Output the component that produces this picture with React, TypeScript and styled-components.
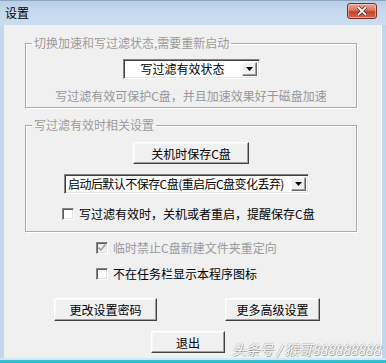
import React from 'react';
import styled, { createGlobalStyle, css } from 'styled-components';

const GlobalStyle = createGlobalStyle`
  html, body {
    margin: 0;
    padding: 0;
    background: #f0f0f0;
  }
  body {
    font-family: "Noto Sans CJK SC", "Microsoft YaHei", sans-serif;
    font-size: 12px;
  }
`;

const Window = styled.div`
  position: relative;
  width: 386px;
  height: 363px;
  display: flex;
  flex-direction: column;
  background: linear-gradient(90deg, #c4d7ec 0%, #cfe0f2 50%, #c2d6eb 100%);
  overflow: hidden;
`;

const TitleBar = styled.div`
  height: 25px;
  flex: none;
  display: flex;
  align-items: flex-start;
  justify-content: space-between;
  background: linear-gradient(180deg, #b8cfe7 0%, #c6d9ee 45%, #cadcf0 100%);
  border-top: 1px solid #8ea6c1;
  box-sizing: border-box;
`;

const Title = styled.span`
  margin: 4px 0 0 5px;
  line-height: 16px;
  font-size: 12px;
  color: #000;
`;

const CloseButton = styled.div`
  width: 30px;
  height: 16px;
  margin: 2px 9px 0 0;
  box-sizing: border-box;
  border: 1px solid #7a2d22;
  border-radius: 3px;
  background: linear-gradient(180deg, #e8a898 0%, #d7755f 45%, #c4422b 55%, #d06a50 100%);
  box-shadow: inset 0 0 0 1px rgba(255, 220, 210, 0.5);
  display: flex;
  align-items: center;
  justify-content: center;
`;

const Body = styled.div`
  flex: 1;
  margin: 0 4px 0 4px;
  background: #f0f0f0;
  border-right: 1px solid #fbfbfb;
  display: flex;
  flex-direction: column;
  align-items: flex-start;
  padding-top: 11px;
`;

const BottomEdge = styled.div`
  height: 5px;
  flex: none;
  background: linear-gradient(180deg, #d8e6f2 0%, #d8e6f2 40%, #3cc1dd 40%, #34b8d8 100%);
`;

const Group = styled.fieldset<{ $gap?: number }>`
  width: 332px;
  box-sizing: border-box;
  margin: ${p => p.$gap ?? 0}px 0 0 21px;
  padding: 0;
  border: 1px solid #a9a9a9;
  box-shadow: 1px 1px 0 #fff, inset 1px 1px 0 #fff;
  display: flex;
  flex-direction: column;
  align-items: flex-start;
`;

const Legend = styled.legend`
  margin-left: 6px;
  padding: 0 2px;
  line-height: 14px;
  height: 14px;
  color: #9a9a9a;
`;

const Item = styled.div<{ $top: number; $left?: number; $center?: boolean }>`
  margin-top: ${p => p.$top}px;
  ${p =>
    p.$center
      ? css`align-self: center;`
      : css`margin-left: ${p.$left ?? 0}px;`}
`;

const Combo = styled.div<{ $width: number }>`
  width: ${p => p.$width}px;
  height: 20px;
  box-sizing: border-box;
  display: flex;
  background: #fff;
  border-top: 1px solid #828282;
  border-left: 1px solid #828282;
  border-bottom: 1px solid #ffffff;
  border-right: 1px solid #ffffff;
  box-shadow: inset 1px 1px 0 #404040, inset -1px -1px 0 #e3e3e3;
`;

const ComboText = styled.div<{ $align: 'center' | 'left' }>`
  flex: 1;
  min-width: 0;
  line-height: 17px;
  padding-left: ${p => (p.$align === 'left' ? 3 : 0)}px;
  letter-spacing: ${p => (p.$align === 'left' ? '-0.55px' : '0')};
  text-align: ${p => p.$align};
  color: #000;
  white-space: nowrap;
`;

const ComboArrow = styled.div`
  width: 15px;
  flex: none;
  margin: 2px 2px 2px 0;
  box-sizing: border-box;
  background: #f0f0f0;
  border-top: 1px solid #fff;
  border-left: 1px solid #fff;
  border-right: 1px solid #696969;
  border-bottom: 1px solid #696969;
  box-shadow: inset -1px -1px 0 #a0a0a0;
  display: flex;
  align-items: center;
  justify-content: center;
`;

const Description = styled.div`
  line-height: 14px;
  color: #979797;
  white-space: nowrap;
`;

const PushButton = styled.div<{ $width: number; $height: number }>`
  width: ${p => p.$width}px;
  height: ${p => p.$height}px;
  box-sizing: border-box;
  background: #f0f0f0;
  border-top: 1px solid #ffffff;
  border-left: 1px solid #ffffff;
  border-right: 1px solid #404040;
  border-bottom: 1px solid #404040;
  box-shadow: inset -1px -1px 0 #a0a0a0, inset 1px 1px 0 #f8f8f8;
  display: flex;
  align-items: center;
  justify-content: center;
  color: #000;
  white-space: nowrap;
`;

const CheckRow = styled.label<{ $disabled?: boolean }>`
  display: flex;
  align-items: center;
  gap: 5px;
  line-height: 14px;
  color: ${p => (p.$disabled ? '#9a9a9a' : '#000')};
  white-space: nowrap;
`;

const CheckBox = styled.span<{ $disabled?: boolean }>`
  width: 12px;
  height: 12px;
  box-sizing: border-box;
  background: ${p => (p.$disabled ? '#f0f0f0' : '#fff')};
  border-top: 1px solid #848484;
  border-left: 1px solid #848484;
  border-right: 1px solid #ffffff;
  border-bottom: 1px solid #ffffff;
  box-shadow: inset 1px 1px 0 #5a5a5a, inset -1px -1px 0 #e0e0e0;
  display: flex;
  align-items: center;
  justify-content: center;
`;

const ButtonRow = styled.div`
  margin: 17px 0 0 50px;
  display: flex;
  gap: 68px;
`;

const Watermark = styled.div`
  position: absolute;
  right: 6px;
  bottom: 7px;
  font-size: 14px;
  line-height: 14px;
  font-style: italic;
  color: #f6f6f6;
  letter-spacing: -0.2px;
  text-shadow: 1px 1px 0 rgba(0, 0, 0, 0.32), -1px 0 0 rgba(0, 0, 0, 0.16), 0 -1px 0 rgba(0, 0, 0, 0.16);
  white-space: nowrap;
`;

const Arrow = () => (
  <svg width="7" height="4" viewBox="0 0 7 4">
    <path d="M0 0h7L3.5 4z" fill="#000" />
  </svg>
);

const Check = ({ color }: { color: string }) => (
  <svg width="8" height="8" viewBox="0 0 8 8">
    <path d="M0.5 3.5l2.3 2.5 4.7-5.5" stroke={color} strokeWidth="1.6" fill="none" />
  </svg>
);

const App: React.FC = () => (
  <>
    <GlobalStyle />
    <Window>
      <TitleBar>
        <Title>设置</Title>
        <CloseButton>
          <svg width="12" height="10" viewBox="0 0 12 10">
            <path d="M2 1l8 8M10 1l-8 8" stroke="#5a1a12" strokeWidth="3.2" />
            <path d="M2 1l8 8M10 1l-8 8" stroke="#fff" strokeWidth="1.8" />
          </svg>
        </CloseButton>
      </TitleBar>

      <Body>
        <Group>
          <Legend>切换加速和写过滤状态,需要重新启动</Legend>
          <Item $top={9} $center>
            <Combo $width={137}>
              <ComboText $align="center">写过滤有效状态</ComboText>
              <ComboArrow><Arrow /></ComboArrow>
            </Combo>
          </Item>
          <Item $top={10} $center>
            <Description>写过滤有效可保护C盘，并且加速效果好于磁盘加速</Description>
          </Item>
          <Item $top={4} />
        </Group>

        <Group $gap={10}>
          <Legend>写过滤有效时相关设置</Legend>
          <Item $top={10} $left={107}>
            <PushButton $width={116} $height={22}>关机时保存C盘</PushButton>
          </Item>
          <Item $top={10} $left={38}>
            <Combo $width={245}>
              <ComboText $align="left">启动后默认不保存C盘(重启后C盘变化丢弃)</ComboText>
              <ComboArrow><Arrow /></ComboArrow>
            </Combo>
          </Item>
          <Item $top={13} $left={36}>
            <CheckRow>
              <CheckBox />
              写过滤有效时，关机或者重启，提醒保存C盘
            </CheckRow>
          </Item>
          <Item $top={10} />
        </Group>

        <Item $top={9} $left={92}>
          <CheckRow $disabled>
            <CheckBox $disabled><Check color="#a0a0a0" /></CheckBox>
            临时禁止C盘新建文件夹重定向
          </CheckRow>
        </Item>
        <Item $top={12} $left={92}>
          <CheckRow>
            <CheckBox />
            不在任务栏显示本程序图标
          </CheckRow>
        </Item>

        <ButtonRow>
          <PushButton $width={103} $height={23}>更改设置密码</PushButton>
          <PushButton $width={95} $height={23}>更多高级设置</PushButton>
        </ButtonRow>
        <Item $top={10} $left={147}>
          <PushButton $width={74} $height={22}>退出</PushButton>
        </Item>
      </Body>
      <BottomEdge />
      <Watermark>头条号 / 猴哥888888888</Watermark>
    </Window>
  </>
);

export default App;
